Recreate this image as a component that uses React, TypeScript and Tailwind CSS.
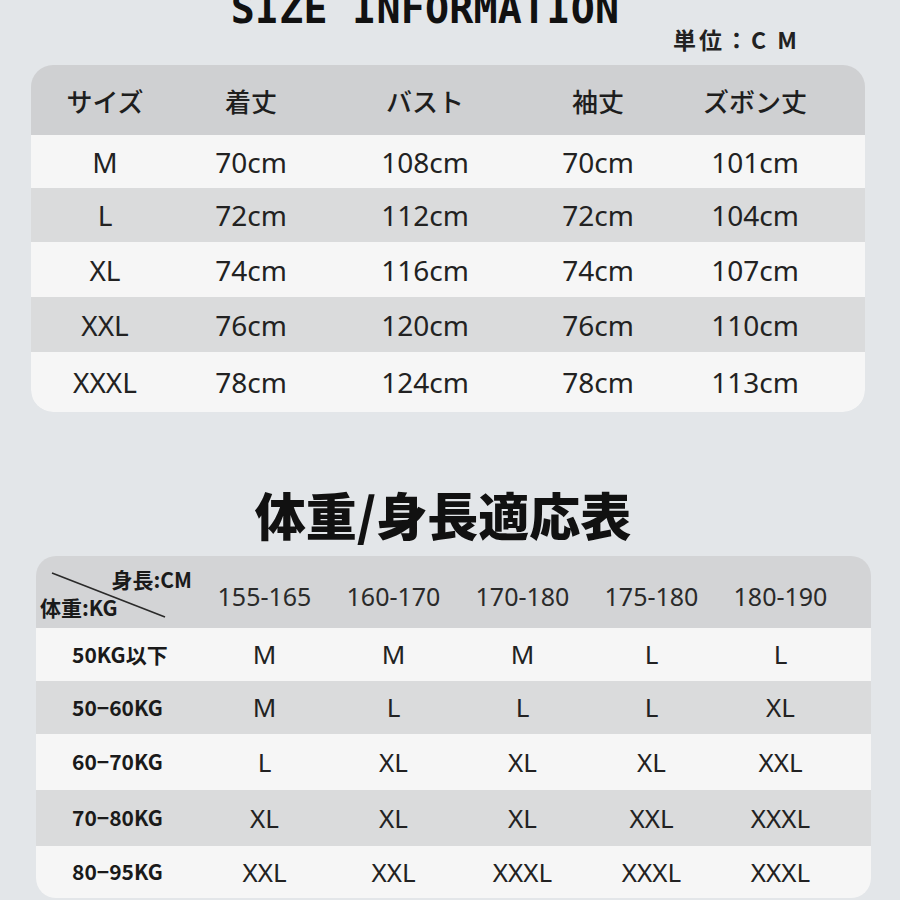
import { FC } from "react"

const sizeRows = [
  ["M", "70cm", "108cm", "70cm", "101cm"],
  ["L", "72cm", "112cm", "72cm", "104cm"],
  ["XL", "74cm", "116cm", "74cm", "107cm"],
  ["XXL", "76cm", "120cm", "76cm", "110cm"],
  ["XXXL", "78cm", "124cm", "78cm", "113cm"],
]

const sizeRowStyle = [
  "h-[53px] bg-[#f6f6f6]",
  "h-[54px] bg-[#dadbdc]",
  "h-[55px] bg-[#f6f6f6]",
  "h-[55px] bg-[#dadbdc]",
  "h-[60px] bg-[#f6f6f6] rounded-b-[22px]",
]

const fitRows = [
  ["50KG以下", "M", "M", "M", "L", "L"],
  ["50−60KG", "M", "L", "L", "L", "XL"],
  ["60−70KG", "L", "XL", "XL", "XL", "XXL"],
  ["70−80KG", "XL", "XL", "XL", "XXL", "XXXL"],
  ["80−95KG", "XXL", "XXL", "XXXL", "XXXL", "XXXL"],
]

const fitRowStyle = [
  "h-[53px] bg-[#f6f6f6]",
  "h-[53px] bg-[#dadbdc]",
  "h-[56px] bg-[#f6f6f6]",
  "h-[56px] bg-[#dadbdc]",
  "h-[52px] bg-[#f6f6f6] rounded-b-[18px]",
]

const sans = "font-['Noto_Sans','Noto_Sans_CJK_JP',sans-serif]"
const cjk = "font-['Noto_Sans_CJK_JP','Noto_Sans',sans-serif]"

const App: FC = () => {
  return (
    <div className="w-[900px] h-[900px] overflow-hidden bg-[#e3e6e9] text-[#1e1e1e] flex flex-col">
      {/* headline, cropped at the top edge like the source image */}
      <div className="flex justify-center pr-[50px] mt-[-11px]">
        <h1 className="font-['DejaVu_Sans_Mono',monospace] font-bold text-[40px] leading-[40px] tracking-[0.2px] text-[#111]">
          SIZE INFORMATION
        </h1>
      </div>
      <div className="flex justify-end pr-[100px] mt-[-2px]">
        <span className={`${cjk} text-[23px] leading-[24px] font-bold tracking-[3px] text-[#222]`}>
          単位：C M
        </span>
      </div>

      {/* size table */}
      <div className="mt-[14px] ml-[31px] w-[834px] rounded-[22px] overflow-hidden">
        <div className={`${cjk} h-[70px] bg-[#cfd0d2] grid grid-cols-[148px_144px_204px_142px_172px] items-center text-[26px] font-medium text-[#1e1e1e]`}>
          <span className="text-center">サイズ</span>
          <span className="text-center">着丈</span>
          <span className="text-center">バスト</span>
          <span className="text-center">袖丈</span>
          <span className="text-center">ズボン丈</span>
        </div>
        {sizeRows.map((row, i) => (
          <div
            key={row[0]}
            className={`${sans} ${sizeRowStyle[i]} grid grid-cols-[148px_144px_204px_142px_172px] items-center text-[28px] text-[#222]`}
          >
            {row.map((cell, j) => (
              <span key={j} className="text-center">
                {cell}
              </span>
            ))}
          </div>
        ))}
      </div>

      {/* second heading */}
      <div className="mt-[74px] flex justify-center pr-[14px]">
        <h2 className={`${cjk} text-[51px] leading-[56px] font-black text-[#111]`}>
          体重/身長適応表
        </h2>
      </div>

      {/* fit table */}
      <div className="mt-[14px] ml-[36px] w-[835px] rounded-[20px] overflow-hidden">
        <div className="h-[72px] bg-[#d3d4d6] grid grid-cols-[164px_129px_129px_129px_129px_129px] items-center">
          <div className={`${cjk} relative h-full flex flex-col justify-center pt-[2px] font-bold text-[21px] leading-[28px] text-[#1a1a1a]`}>
            <svg className="absolute left-0 top-0" width="164" height="72" viewBox="0 0 164 72">
              <line x1="16" y1="17" x2="129" y2="61" stroke="#2a2a2a" strokeWidth="1.6" />
            </svg>
            <span className="self-end pr-[8px]">身長:CM</span>
            <span className="self-start pl-[4px]">体重:KG</span>
          </div>
          {["155-165", "160-170", "170-180", "175-180", "180-190"].map((h) => (
            <span key={h} className={`${sans} pt-[10px] text-center text-[25px] text-[#2a2a2a]`}>
              {h}
            </span>
          ))}
        </div>
        {fitRows.map((row, i) => (
          <div
            key={row[0]}
            className={`${fitRowStyle[i]} grid grid-cols-[164px_129px_129px_129px_129px_129px] items-center`}
          >
            <span className={`${cjk} pl-[36px] text-[21px] font-bold text-[#1a1a1a]`}>{row[0]}</span>
            {row.slice(1).map((cell, j) => (
              <span key={j} className={`${sans} text-center text-[26px] text-[#222]`}>
                {cell}
              </span>
            ))}
          </div>
        ))}
      </div>
    </div>
  )
}

export default App
